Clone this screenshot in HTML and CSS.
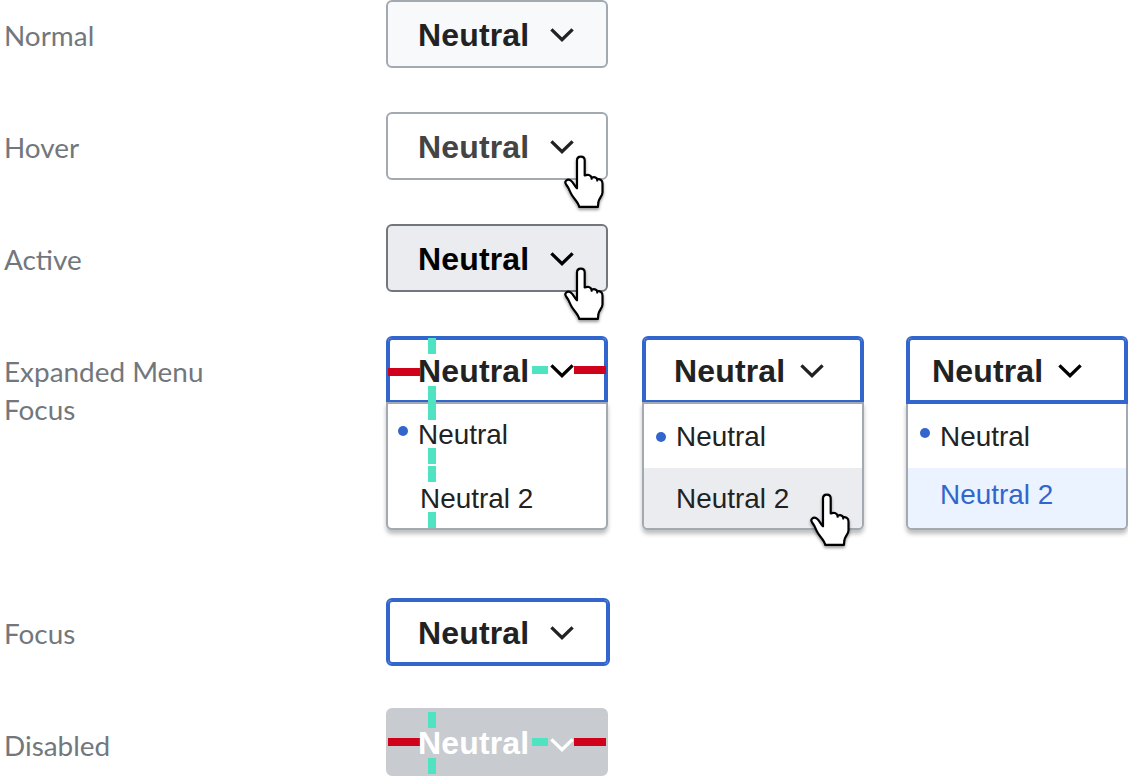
FILE: index.html
```html
<!DOCTYPE html>
<html lang="en">
<head>
<meta charset="utf-8">
<title>Neutral dropdown states</title>
<link rel="stylesheet" href="styles.css">
</head>
<body>
<svg width="0" height="0" class="defs" aria-hidden="true">
  <symbol id="chevron" viewBox="0 0 24 16">
    <path d="M1.4 1.4 12 11.8 22.6 1.4" fill="none" stroke="currentColor" stroke-width="3.3"/>
  </symbol>
  <symbol id="hand" viewBox="0 0 46 60">
    <path d="M15 34.3V6.4C15 1.5 22.7 1.5 22.7 6.4V21.4C25.4 20.2 28.8 20.8 29.6 23.8C31.8 22.6 34.6 23.2 35.2 25.4C37.6 24.6 40.5 26.2 40.5 29.4V38.4C40.5 42 36.4 45.2 36.4 48.4L35.9 52.9H17.2C16.8 48.4 10.6 43.6 8.8 39.2C7.4 35.6 6.4 33.2 4 30.2C2 27.4 5.2 24.4 8.6 26.4C11.4 28.2 12.6 32 15 34.3Z" fill="#fff" stroke="#000" stroke-width="2.2" stroke-linejoin="round"/>
    <path d="M29.6 23.4V25.8M35.2 25V27.4" fill="none" stroke="#000" stroke-width="1.8"/>
  </symbol>
</svg>
<main class="sheet">
  <section class="row">
    <div class="label">Normal</div>
    <div class="button normal"><span class="text">Neutral</span><svg class="chevron"><use href="#chevron"/></svg></div>
  </section>
  <section class="row">
    <div class="label">Hover</div>
    <div class="button hover"><span class="text">Neutral</span><svg class="chevron"><use href="#chevron"/></svg><svg class="hand"><use href="#hand"/></svg></div>
  </section>
  <section class="row">
    <div class="label">Active</div>
    <div class="button active"><span class="text">Neutral</span><svg class="chevron"><use href="#chevron"/></svg><svg class="hand"><use href="#hand"/></svg></div>
  </section>
  <section class="row row-expanded">
    <div class="label">Expanded Menu<br>Focus</div>
    <div class="dropdown measured">
      <i class="mark red left"></i><i class="mark red right"></i><i class="mark gap"></i>
      <i class="mark v v1"></i><i class="mark v v2"></i><i class="mark v v3"></i><i class="mark v v4"></i><i class="mark v v5"></i>
      <div class="button open"><span class="text">Neutral</span><svg class="chevron black"><use href="#chevron"/></svg></div>
      <div class="menu">
        <div class="item"><i class="dot"></i><span>Neutral</span></div>
        <div class="item second"><span>Neutral 2</span></div>
      </div>
    </div>
    <div class="dropdown hovered">
      <div class="button open"><span class="text">Neutral</span><svg class="chevron"><use href="#chevron"/></svg></div>
      <div class="menu">
        <div class="item"><i class="dot"></i><span>Neutral</span></div>
        <div class="item second"><span>Neutral 2</span></div>
      </div>
      <svg class="hand"><use href="#hand"/></svg>
    </div>
    <div class="dropdown selected">
      <div class="button open"><span class="text">Neutral</span><svg class="chevron black"><use href="#chevron"/></svg></div>
      <div class="menu">
        <div class="item"><i class="dot"></i><span>Neutral</span></div>
        <div class="item second"><span>Neutral 2</span></div>
      </div>
    </div>
  </section>
  <section class="row row-focus">
    <div class="label">Focus</div>
    <div class="button focus"><span class="text">Neutral</span><svg class="chevron"><use href="#chevron"/></svg></div>
  </section>
  <section class="row row-disabled">
    <div class="label">Disabled</div>
    <div class="button disabled">
      <i class="mark red left"></i><i class="mark red right"></i><i class="mark gap"></i>
      <i class="mark v top"></i><i class="mark v bottom"></i>
      <span class="text">Neutral</span><svg class="chevron"><use href="#chevron"/></svg>
    </div>
  </section>
</main>
</body>
</html>
```
FILE: styles.css
```css
* { box-sizing: border-box; }

body {
  margin: 0;
  background: #fff;
  color: #222;
  font-family: "Liberation Sans", Arial, sans-serif;
}

.defs { display: none; }

.sheet {
  display: grid;
  grid-template-rows: 112px 112px 112px 262px 110px 68px;
  width: 1128px;
  height: 776px;
  overflow: hidden;
}

.row { display: flex; align-items: flex-start; }

.label {
  width: 386px;
  flex: none;
  padding: 16px 0 0 4px;
  color: #72777d;
  font: 27.9px/38px Lato, sans-serif;
}
.row-disabled .label { padding-top: 18px; }

.button {
  position: relative;
  display: flex;
  align-items: flex-start;
  gap: 22px;
  width: 222px;
  height: 68px;
  padding: 17px 0 0 30px;
  border: 2px solid #a2a9b1;
  border-radius: 6px;
}
.text {
  position: relative;
  width: 110px;
  font-size: 32px;
  font-weight: 700;
  line-height: 32px;
  letter-spacing: .15px;
  white-space: nowrap;
}
.chevron {
  position: relative;
  width: 24px;
  height: 16px;
  margin-top: 9px;
  flex: none;
  overflow: visible;
}
.black { color: #000; }

.normal { background: #f8f9fa; }
.hover { background: #fff; }
.hover .text { color: #444; }
.active { background: #eaecf0; border-color: #72777d; color: #000; }
.focus { width: 224px; border-color: #36c; box-shadow: inset 0 0 0 2px #36c; }
.disabled { background: #c8ccd1; border-color: #c8ccd1; color: #fff; }
.disabled .chevron { margin-top: 11px; }

.hand {
  position: absolute;
  left: 174px;
  top: 40px;
  width: 46px;
  height: 60px;
  overflow: visible;
  filter: drop-shadow(0 2px 1.5px rgba(0, 0, 0, .4));
}

.dropdown { position: relative; width: 222px; flex: none; }
.hovered { margin-left: 34px; }
.selected { margin-left: 42px; }
.open {
  border-color: #36c;
  border-radius: 6px 6px 0 0;
  box-shadow: inset 0 0 0 2px #36c;
}
.hovered .open, .selected .open { gap: 16px; }
.selected .open { z-index: 1; padding-left: 24px; }

/* The menu's top rule covers the lower edge of the button. */
.menu {
  position: relative;
  height: 128px;
  margin-top: -2px;
  border: 2px solid #a2a9b1;
  border-radius: 0 0 6px 6px;
  background: #fff;
  box-shadow: 0 4px 4px rgba(0, 0, 0, .25);
}
.item {
  position: relative;
  height: 64px;
  padding: 19px 0 0 32px;
  font-size: 27.9px;
  line-height: 28px;
}
.second { height: 60px; padding-top: 17px; }
.measured .item:first-child { padding: 17px 0 0 30px; }
.hovered .second { background: #eaecf0; border-radius: 0 0 4px 4px; }
.selected .second {
  padding-top: 13px;
  background: #eaf3ff;
  border-radius: 0 0 4px 4px;
  color: #36c;
}
.dot {
  position: absolute;
  left: 12px;
  top: 28px;
  width: 10px;
  height: 10px;
  border-radius: 50%;
  background: #36c;
}
.measured .dot { left: 10px; top: 22px; }
.selected .dot { top: 24px; }

.dropdown .hand { left: 166px; top: 156px; }

/* Spacing annotations laid over the controls. */
.mark { position: absolute; background: #50e3c2; }
.measured > .mark { z-index: 1; }
.measured .text, .measured .chevron { z-index: 2; }
.red { width: 32px; height: 8px; background: #d0021b; }
.gap { width: 16px; height: 8px; left: 146px; top: 30px; }
.v { width: 8px; height: 16px; left: 42px; }
.left { left: 2px; top: 32px; }
.right { left: 188px; top: 30px; }
.v1 { top: 2px; }
.v2 { top: 50px; height: 34px; }
.v3 { top: 112px; }
.v4 { top: 130px; }
.v5 { top: 176px; }
.disabled .red { top: 28px; }
.disabled .left { left: 0; }
.disabled .right { left: 186px; }
.disabled .gap { left: 144px; top: 28px; }
.disabled .v { left: 40px; }
.disabled .top { top: 2px; }
.disabled .bottom { top: 48px; }
```
